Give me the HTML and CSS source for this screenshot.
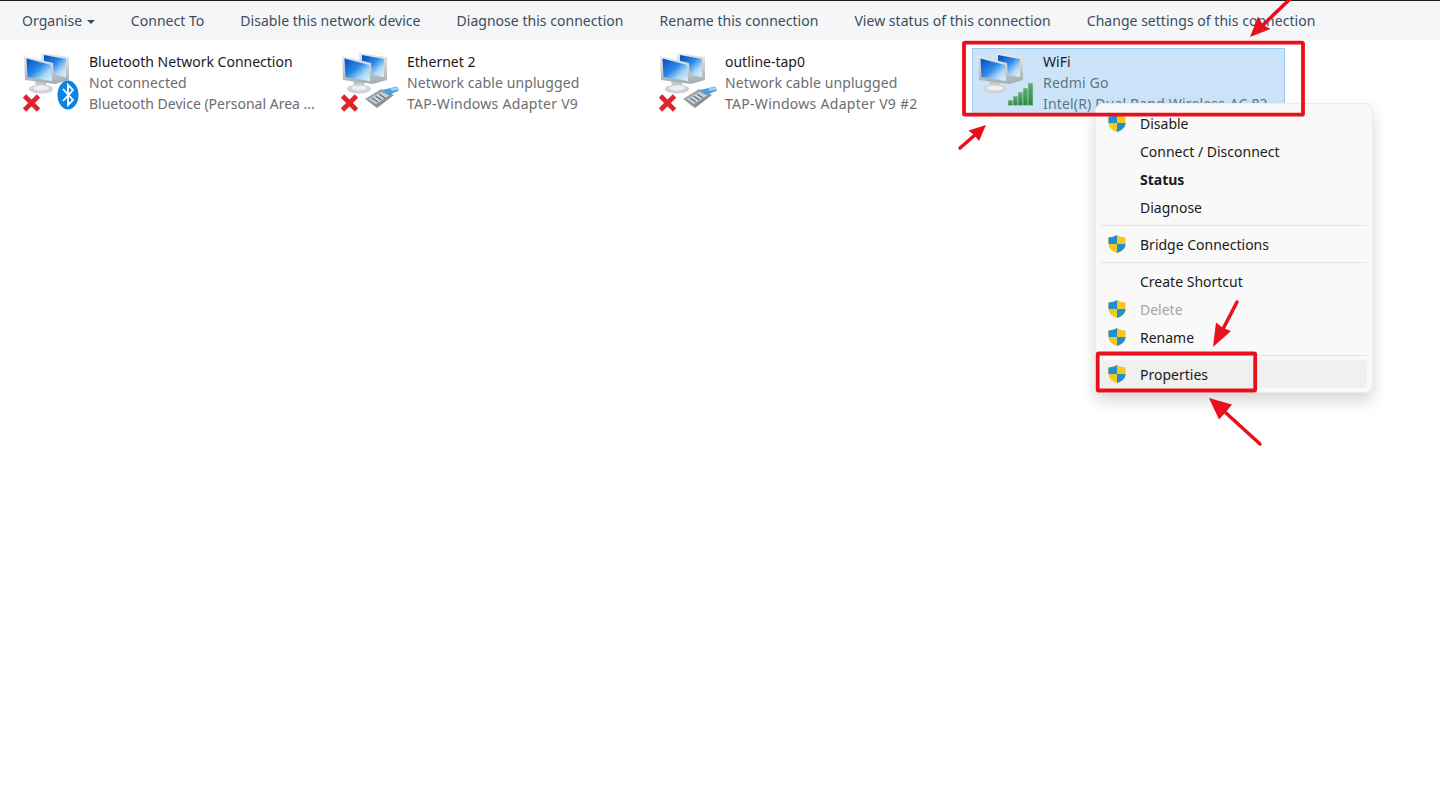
FILE: index.html
```html
<!DOCTYPE html>
<html lang="en">
<head>
    <meta charset="UTF-8">
    <meta name="viewport" content="width=device-width, initial-scale=1.0">
    <title>Network Connections</title>
    <link rel="stylesheet" href="styles.css">
</head>
<body>
    <!-- shared icon parts -->
    <svg class="defs" width="0" height="0" aria-hidden="true">
        <defs>
            <linearGradient id="screen" x1="0" y1="0" x2="1" y2="1">
                <stop offset="0" stop-color="#0648c0"/>
                <stop offset="0.45" stop-color="#2a8ae8"/>
                <stop offset="0.72" stop-color="#a9d6f6"/>
                <stop offset="1" stop-color="#e6f3fc"/>
            </linearGradient>
            <linearGradient id="frame" x1="0" y1="0" x2="0" y2="1">
                <stop offset="0" stop-color="#e6eaed"/>
                <stop offset="1" stop-color="#a4acb1"/>
            </linearGradient>
            <linearGradient id="bar" x1="0" y1="0" x2="0" y2="1">
                <stop offset="0" stop-color="#62ae78"/>
                <stop offset="1" stop-color="#2c8647"/>
            </linearGradient>
            <linearGradient id="plug" x1="0" y1="0" x2="1" y2="1">
                <stop offset="0" stop-color="#aab6bd"/>
                <stop offset="1" stop-color="#6f7e87"/>
            </linearGradient>
            <symbol id="monitors" viewBox="0 0 62 62">
                <polygon points="21,3 49,7 49,30 35,34 22,26" fill="url(#frame)"/>
                <polygon points="24,5 46,9 46,27 24,23" fill="url(#screen)"/>
                <polygon points="15,29 26,32 27,38 16,37" fill="#c2c7ca"/>
                <ellipse cx="21" cy="39" rx="12" ry="4.500" fill="#cfd3d6"/>
                <ellipse cx="21" cy="38" rx="8" ry="2.600" fill="#eef0f1"/>
                <polygon points="4,6 33,13 35,34 5,30" fill="url(#frame)"/>
                <polygon points="6.500,8.500 31,15 32,31 7.500,27" fill="url(#screen)"/>
            </symbol>
            <symbol id="cross" viewBox="0 0 62 62">
                <path d="M4.500 46 L18.500 60 M18.500 46 L4.500 60" stroke="#dc262c" stroke-width="4.800"/>
            </symbol>
            <symbol id="cable" viewBox="0 0 62 62">
                <polygon points="27,49 43,39 56,45 39,58" fill="url(#plug)"/>
                <polygon points="31,49 43,42 51,45.500 38,54" fill="#ccd4d9"/>
                <path d="M34 48 l6 4 M37.500 46 l6 4 M41 44 l6 4" stroke="#5d6c75" stroke-width="1.200"/>
                <polygon points="44,40 59,36.500 61,40.500 51,45" fill="#4a9fdc"/>
                <polygon points="52,38.500 60,37 60.500,39.500 54,41" fill="#9bd0f2"/>
            </symbol>
            <symbol id="shield" viewBox="0 0 20 20">
                <path d="M10 1 C7.500 2.600 5 3.200 1.500 3.400 V10 C1.500 14.200 5 17.400 10 19 C15 17.400 18.500 14.200 18.500 10 V3.400 C15 3.200 12.500 2.600 10 1Z" fill="#f4c81f"/>
                <path d="M10 1 C7.500 2.600 5 3.200 1.500 3.400 V10 H10Z" fill="#1f8fd0"/>
                <path d="M10 10 H18.500 C18.500 14.200 15 17.400 10 19Z" fill="#1f8fd0"/>
            </symbol>
        </defs>
    </svg>

    <div class="toolbar">
        <span class="tool">Organise <i class="caret"></i></span>
        <span class="tool">Connect To</span>
        <span class="tool">Disable this network device</span>
        <span class="tool">Diagnose this connection</span>
        <span class="tool">Rename this connection</span>
        <span class="tool">View status of this connection</span>
        <span class="tool">Change settings of this connection</span>
    </div>

    <div class="tiles">
        <div class="tile">
            <svg class="tile-icon" viewBox="0 0 62 62">
                <use href="#monitors"/>
                <use href="#cross"/>
                <ellipse cx="48" cy="45" rx="10.500" ry="14.500" fill="#0a84e4"/>
                <path d="M43 39 L53 50 L48 55 V35 L53 40 L43 51" fill="none" stroke="#fff" stroke-width="1.800"/>
            </svg>
            <div class="tile-text">
                <div class="tile-name">Bluetooth Network Connection</div>
                <div class="tile-sub">Not connected</div>
                <div class="tile-sub tight">Bluetooth Device (Personal Area ...</div>
            </div>
        </div>
        <div class="tile">
            <svg class="tile-icon" viewBox="0 0 62 62">
                <use href="#monitors"/>
                <use href="#cross"/>
                <use href="#cable"/>
            </svg>
            <div class="tile-text">
                <div class="tile-name">Ethernet 2</div>
                <div class="tile-sub">Network cable unplugged</div>
                <div class="tile-sub wide">TAP-Windows Adapter V9</div>
            </div>
        </div>
        <div class="tile">
            <svg class="tile-icon" viewBox="0 0 62 62">
                <use href="#monitors"/>
                <use href="#cross"/>
                <use href="#cable"/>
            </svg>
            <div class="tile-text">
                <div class="tile-name">outline-tap0</div>
                <div class="tile-sub">Network cable unplugged</div>
                <div class="tile-sub wide">TAP-Windows Adapter V9 #2</div>
            </div>
        </div>
        <div class="tile selected">
            <svg class="tile-icon" viewBox="0 0 62 62">
                <use href="#monitors"/>
                <g class="bars">
                    <rect x="34" y="50" width="5" height="5.500"/>
                    <rect x="39" y="46" width="5" height="9.500"/>
                    <rect x="44" y="42" width="5" height="13.500"/>
                    <rect x="49" y="38" width="5" height="17.500"/>
                    <rect x="54" y="33" width="5" height="22.500"/>
                </g>
            </svg>
            <div class="tile-text">
                <div class="tile-name">WiFi</div>
                <div class="tile-sub">Redmi Go</div>
                <div class="tile-sub">Intel(R) Dual Band Wireless-AC 82...</div>
            </div>
        </div>
    </div>

    <div class="menu">
        <div class="menu-item"><svg class="shield"><use href="#shield"/></svg>Disable</div>
        <div class="menu-item">Connect / Disconnect</div>
        <div class="menu-item default">Status</div>
        <div class="menu-item">Diagnose</div>
        <div class="menu-sep"></div>
        <div class="menu-item"><svg class="shield"><use href="#shield"/></svg>Bridge Connections</div>
        <div class="menu-sep"></div>
        <div class="menu-item">Create Shortcut</div>
        <div class="menu-item disabled"><svg class="shield"><use href="#shield"/></svg>Delete</div>
        <div class="menu-item"><svg class="shield"><use href="#shield"/></svg>Rename</div>
        <div class="menu-sep"></div>
        <div class="menu-item active"><svg class="shield"><use href="#shield"/></svg>Properties</div>
    </div>

    <!-- red annotations drawn on top of the screenshot -->
    <svg class="marks" viewBox="0 0 1440 791">
        <rect x="964" y="42.700" width="339" height="72" rx="1"/>
        <rect x="1097.700" y="353.500" width="157.500" height="37" rx="1"/>
        <line x1="1291" y1="-2" x2="1262" y2="26"/>
        <polygon points="1250,37 1270.500,29 1263,25 1258,16.500"/>
        <line x1="960" y1="148" x2="975" y2="135"/>
        <polygon points="986,125 979,141 974,135 968.500,130.500"/>
        <line x1="1237" y1="302" x2="1223" y2="329"/>
        <polygon points="1213,347 1231,331 1223,328 1216,322.500"/>
        <line x1="1260" y1="444" x2="1226" y2="413"/>
        <polygon points="1209,398 1232,404.500 1226,412 1219,419.500"/>
    </svg>
</body>
</html>
```

FILE: styles.css
```css
html, body {
    height: 100%;
}
body {
    font-family: "Noto Sans", "Open Sans", Arial, sans-serif;
    font-size: 14px;
    margin: 0;
    background-color: #fff;
    color: #1a1a1a;
    overflow: hidden;
}
.defs {
    display: block;
    height: 0;
}
.toolbar {
    display: flex;
    align-items: center;
    gap: 36px;
    height: 38px;
    padding-left: 22px;
    background-color: #f5f6f7;
    border-top: 1px solid #1c1c1c;
    border-bottom: 1px solid #f0f1f2;
    color: #3c4c5e;
    letter-spacing: 0.03px;
}
.tool {
    white-space: nowrap;
}
.caret {
    display: inline-block;
    width: 0;
    height: 0;
    margin-left: 1px;
    vertical-align: 2px;
    border-left: 4px solid transparent;
    border-right: 4px solid transparent;
    border-top: 4px solid #3c4c5e;
}
.tiles {
    display: flex;
    gap: 5px;
    padding: 8px 0 0 18px;
}
.tile {
    display: flex;
    box-sizing: border-box;
    width: 313px;
    height: 68px;
    border: 1px solid transparent;
    overflow: hidden;
}
.tile.selected {
    background-color: #cce4f9;
    border-color: #9fc9ec;
}
.tile-icon {
    flex: none;
    width: 62px;
    height: 62px;
    margin: 1px 0 0 1px;
}
.tile-text {
    margin: 2px 0 0 7px;
    white-space: nowrap;
}
.tile-name {
    line-height: 22px;
}
.tile-sub {
    line-height: 20.500px;
    color: #6d6d6d;
    letter-spacing: 0.1px;
}
.tile-sub.tight {
    letter-spacing: 0;
}
.tile-sub.wide {
    letter-spacing: 0.28px;
}
.selected .tile-sub {
    color: #5f7482;
    letter-spacing: 0.17px;
}
.bars rect {
    fill: url(#bar);
    stroke: #c4e4cc;
    stroke-width: 0.500;
}
.menu {
    position: absolute;
    left: 1095px;
    top: 103px;
    box-sizing: border-box;
    width: 278px;
    padding: 5px 5px 4px;
    background-color: #f9f9f9;
    border: 1px solid #ececec;
    border-radius: 8px;
    box-shadow: 0 8px 16px rgba(0, 0, 0, 0.16);
}
.menu-item {
    position: relative;
    height: 28px;
    line-height: 30px;
    padding-left: 39px;
    border-radius: 4px;
}
.menu-item.default {
    font-weight: bold;
}
.menu-item.disabled {
    color: #a3a3a3;
}
.menu-item.active {
    background-color: #f0f0f0;
}
.menu-sep {
    height: 1px;
    margin: 4px 0;
    background-color: #e4e4e4;
}
.shield {
    position: absolute;
    left: 6px;
    top: 4px;
    width: 20px;
    height: 20px;
}
.marks {
    position: absolute;
    left: 0;
    top: 0;
    width: 1440px;
    height: 791px;
    pointer-events: none;
}
.marks rect {
    fill: none;
    stroke: #e8101a;
    stroke-width: 3.800;
}
.marks line {
    stroke: #e8101a;
    stroke-width: 3.500;
    stroke-linecap: round;
}
.marks polygon {
    fill: #e8101a;
}
```
